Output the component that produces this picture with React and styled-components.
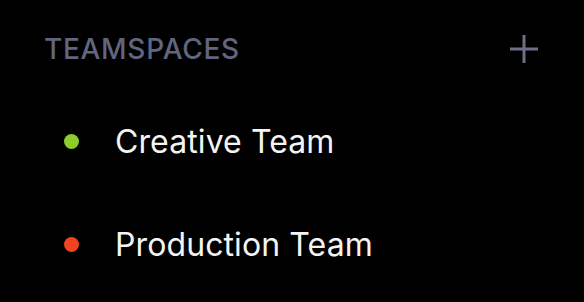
import React from "react";
import styled, { createGlobalStyle } from "styled-components";

const Global = createGlobalStyle`
  html, body { margin: 0; padding: 0; background: #000; }
  body { font-family: Inter, "Noto Sans", "Liberation Sans", sans-serif; -webkit-font-smoothing: antialiased; }
`;

const Panel = styled.div`
  width: 584px;
  height: 302px;
  box-sizing: border-box;
  padding: 28px 46px 0 44px;
  background: #000;
`;

const Header = styled.div`
  height: 42px;
  display: flex;
  align-items: center;
  justify-content: space-between;
`;

const Title = styled.span`
  color: #60667f;
  font-size: 28px;
  font-weight: 500;
  letter-spacing: 0.7px;
  text-transform: uppercase;
`;

const AddButton = styled.button`
  width: 28px;
  height: 28px;
  padding: 0;
  border: 0;
  background: none;
  display: flex;
  align-items: center;
  justify-content: center;
  color: #6b7088;
  cursor: pointer;
`;

const List = styled.ul`
  list-style: none;
  margin: 20px 0 0;
  padding: 0;
`;

const Item = styled.li`
  height: 103px;
  display: flex;
  align-items: center;
  padding-left: 20px;
  gap: 36px;
`;

const Dot = styled.span`
  width: 15px;
  height: 15px;
  border-radius: 50%;
  background: ${(p) => p.$color};
  flex: none;
`;

const Label = styled.span`
  color: #f4f4f5;
  font-size: 32px;
  font-weight: 400;
  letter-spacing: 0.1px;
`;

const teams = [
  { name: "Creative Team", color: "#8acd2c" },
  { name: "Production Team", color: "#f2431f" },
];

export default function App() {
  return (
    <>
      <Global />
      <Panel>
        <Header>
          <Title>Teamspaces</Title>
          <AddButton aria-label="Add teamspace">
            <svg width="28" height="28" viewBox="0 0 28 28">
              <path d="M14 0v28M0 14h28" stroke="currentColor" strokeWidth="3" fill="none" />
            </svg>
          </AddButton>
        </Header>
        <List>
          {teams.map((t) => (
            <Item key={t.name}>
              <Dot $color={t.color} />
              <Label>{t.name}</Label>
            </Item>
          ))}
        </List>
      </Panel>
    </>
  );
}
